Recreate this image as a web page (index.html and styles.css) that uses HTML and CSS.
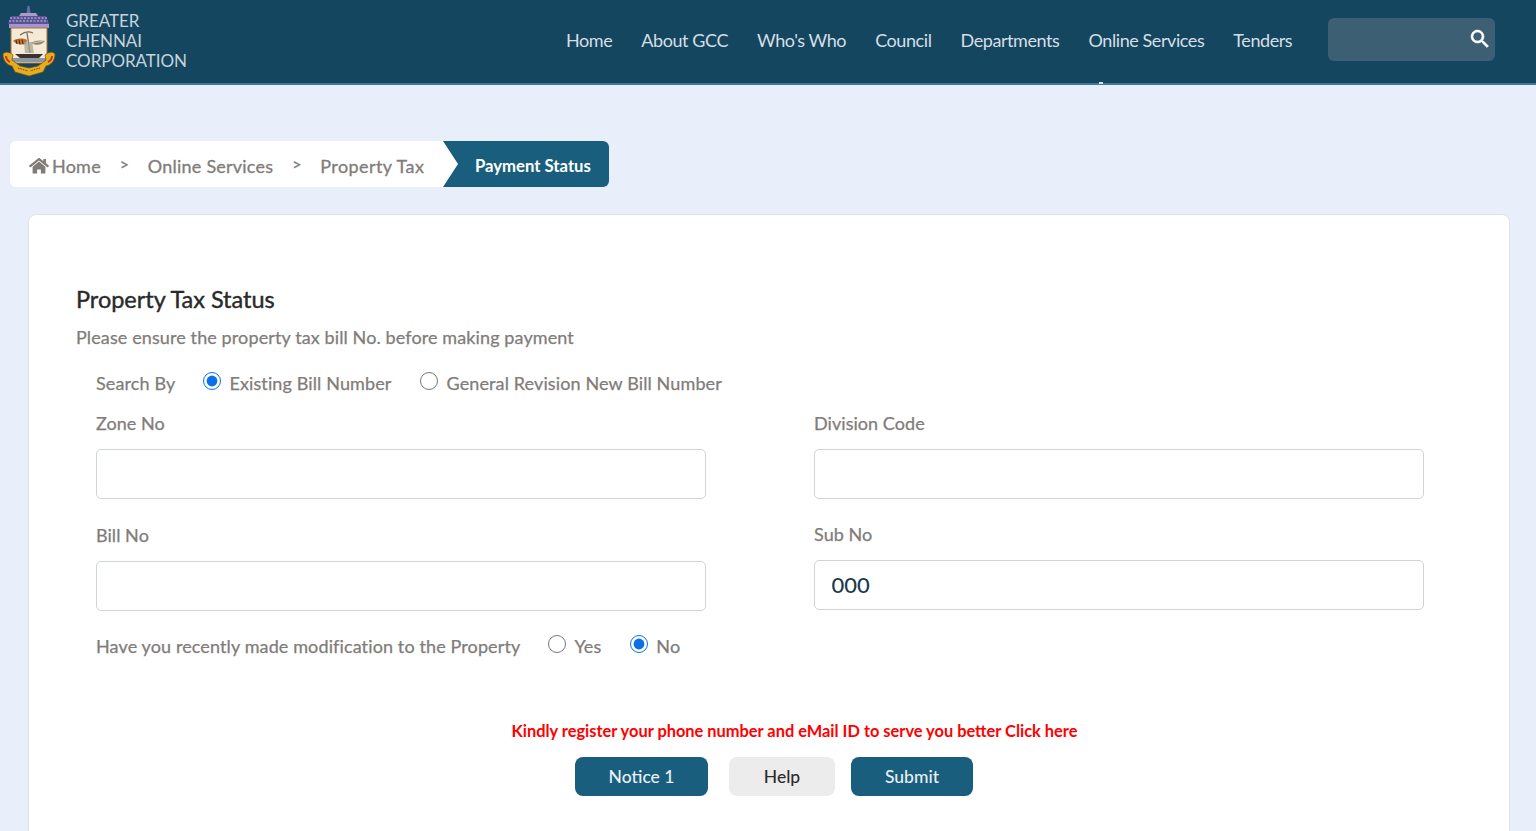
FILE: index.html
```html
<!DOCTYPE html>
<html lang="en">
<head>
<meta charset="utf-8">
<title>Property Tax Status</title>
<link rel="stylesheet" href="styles.css">
</head>
<body>
<header class="topbar">
  <a class="brand">
    <svg class="logo" width="56" height="72" viewBox="0 0 56 72">
      <path d="M26.500 0h2l1 7h-4z" fill="#6f6aa5"/>
      <path d="M20 7h15l2 3H18z" fill="#a79cc9"/>
      <path d="M10 10h35l3 8H7z" fill="#5b5296"/>
      <path d="M9 12h37M8 15h39" stroke="#c9c3e2" stroke-width="1" stroke-dasharray="2 1.500"/>
      <rect x="8" y="18" width="40" height="4" fill="#a495cf"/>
      <rect x="10" y="22" width="36" height="35" fill="#f5ead6" stroke="#a9743c"/>
      <path d="M12 35c4-3 10-3 14-1l-1 4c-4 1-9 1-13-3z" fill="#c4702c"/>
      <path d="M15 34l1 4M18 33.500l1 5M21 33.500l1 4.500" stroke="#3a2414" stroke-width=".9"/>
      <path d="M30 37c4-3 10-3 14-2-3 4-9 5-14 2z" fill="#8f8470"/>
      <path d="M32 37l10-2" stroke="#e6dcc6" stroke-width=".8"/>
      <path d="M26 27l3 20M19 29c4-3 9-4 13-2" stroke="#7b6c5c" stroke-width="1.300" fill="none"/>
      <path d="M23 36h8l2 11h-9z" fill="#a7a096" opacity=".7"/>
      <path d="M14 48h28l-4 4H19z" fill="#3a3330"/>
      <rect x="11" y="52" width="34" height="4" fill="#8c97a0"/>
      <path d="M12 49c-3-3-8-4-10-1 0 7 4 11 9 12l3 6 14 4 14-4 3-6c5-1 9-5 9-12-2-3-7-2-10 1l1 5-8 6-9 2-9-2-8-6z" fill="#e6ae1f" stroke="#7a4f10" stroke-width=".7"/>
      <path d="M5 50c0 3 2 5 4 6M51 50c0 3-2 5-4 6" stroke="#c8321e" stroke-width="2" fill="none"/>
      <path d="M17 62l10 3M39 62l-10 3" stroke="#6b4310" stroke-width="1" stroke-dasharray="1.500 1"/>
    </svg>
    <span class="brand-name">GREATER<br>CHENNAI<br>CORPORATION</span>
  </a>
  <nav class="menu">
    <a>Home</a>
    <a>About GCC</a>
    <a>Who's Who</a>
    <a>Council</a>
    <a>Departments</a>
    <a>Online Services</a>
    <a>Tenders</a>
  </nav>
  <div class="search">
    <svg width="24" height="24" viewBox="0 0 24 24"><path fill="#fff" stroke="#fff" stroke-width=".6" d="M15.500 14h-.79l-.28-.27A6.470 6.470 0 0 0 16 9.500 6.500 6.500 0 1 0 9.500 16c1.610 0 3.090-.59 4.230-1.570l.27.28v.79l5 4.990L20.490 19l-4.990-5zm-6 0C7.010 14 5 11.990 5 9.500S7.010 5 9.500 5 14 7.010 14 9.500 11.990 14 9.500 14z"/></svg>
  </div>
</header>

<nav class="crumbs">
  <a class="crumb crumb-home">
    <svg class="home-icon" width="20" height="17" viewBox="0 0 20 17"><path fill="#807c79" d="M10 3.400 3.600 8.700V15c0 .4.300.6.600.6h3.900v-4.200h3.800v4.200h3.900c.3 0 .6-.2.600-.6V8.700zM19.800 7.600 17 5.300V1h-2.600v2.100L11 .4C10.400-.1 9.600-.1 9 .4L.2 7.600c-.2.2-.2.5 0 .7l.8.900c.2.2.5.2.7 0L10 2.400l8.300 6.800c.2.2.5.2.7 0l.8-.9c.2-.2.2-.5 0-.7z"/></svg>
    Home
  </a>
  <span class="sep">&gt;</span>
  <a class="crumb">Online Services</a>
  <span class="sep">&gt;</span>
  <a class="crumb crumb-tax">Property Tax</a>
  <span class="crumb-active">Payment Status</span>
</nav>

<main class="card">
  <h1 class="title">Property Tax Status</h1>
  <p class="lead">Please ensure the property tax bill No. before making payment</p>
  <form class="form">
    <div class="choice-row">
      <span class="choice-label">Search By</span>
      <label class="choice"><input type="radio" name="by" checked><span>Existing Bill Number</span></label>
      <label class="choice"><input type="radio" name="by"><span>General Revision New Bill Number</span></label>
    </div>
    <div class="columns">
      <div class="col">
        <label class="field"><span class="field-label">Zone No</span><input class="input" type="text"></label>
        <label class="field"><span class="field-label">Bill No</span><input class="input" type="text"></label>
      </div>
      <div class="col">
        <label class="field"><span class="field-label">Division Code</span><input class="input" type="text"></label>
        <label class="field field-tight"><span class="field-label">Sub No</span><input class="input" type="text" value="000"></label>
      </div>
    </div>
    <div class="choice-row choice-row-mod">
      <span class="choice-label">Have you recently made modification to the Property</span>
      <label class="choice"><input type="radio" name="mod"><span>Yes</span></label>
      <label class="choice"><input type="radio" name="mod" checked><span>No</span></label>
    </div>
  </form>
  <p class="notice">Kindly register your phone number and eMail ID to serve you better Click here</p>
  <div class="actions">
    <button class="btn btn-primary btn-notice" type="button">Notice 1</button>
    <button class="btn btn-light" type="button">Help</button>
    <button class="btn btn-primary btn-submit" type="button">Submit</button>
  </div>
</main>
</body>
</html>
```
FILE: styles.css
```css
* { box-sizing: border-box; }
html, body { height: 100%; overflow: hidden; }
body {
  margin: 0;
  background: #e9effa;
  font-family: Lato, "Liberation Sans", sans-serif;
  color: #807c79;
}
.topbar {
  position: relative;
  height: 85px;
  background: #154660;
  border-bottom: 2px solid #3f7a99;
  display: flex;
  align-items: flex-start;
}
.topbar::after {
  content: "";
  position: absolute;
  left: 1099px;
  bottom: -1px;
  width: 4px;
  height: 2px;
  background: #cfe0ea;
  box-shadow: 24px 0 0 -1px #cfe0ea;
}
.brand { display: flex; margin-left: 1px; padding-top: 6px; width: 549px; }
.logo { flex: none; }
.brand-name {
  margin: 4.500px 0 0 9px;
  font-size: 17px;
  line-height: 20px;
  color: #c6d3da;
  letter-spacing: -.05px;
}
.menu { display: flex; gap: 29px; padding-top: 28px; margin-left: 16px; }
.menu a { font-size: 18px; line-height: 24px; color: #d5dfe4; letter-spacing: -.42px; white-space: nowrap; }
.search {
  margin: 18px 0 0 36px;
  width: 167px;
  height: 43px;
  background: #3c5f74;
  border-radius: 6px;
  display: flex;
  justify-content: flex-end;
  align-items: center;
  padding: 0 3px 2px 0;
}
.crumbs {
  margin: 56px 0 0 10px;
  width: 599px;
  height: 46px;
  background: #fff;
  border-radius: 6px;
  display: flex;
  align-items: center;
  font-size: 18px;
  -webkit-text-stroke: .3px #807c79;
  letter-spacing: .22px;
}
.crumb { color: #807c79; white-space: nowrap; padding-top: 3px; }
.crumb-home { display: flex; align-items: center; gap: 3px; margin-left: 19px; }
.home-icon { margin-top: 1px; }
.crumb-tax { letter-spacing: .42px; }
.sep { font-size: 16px; margin: -2px 19px 0; width: 9px; }
.crumb-active {
  margin-left: auto;
  width: 166px;
  height: 46px;
  background: #195f7d;
  color: #fff;
  font-size: 16.700px;
  font-weight: 700;
  letter-spacing: 0;
  -webkit-text-stroke: 0;
  border-radius: 0 6px 6px 0;
  display: flex;
  align-items: center;
  padding: 3px 0 0 32px;
  clip-path: polygon(0 0, 100% 0, 100% 100%, 0 100%, 15px 50%);
}
.card {
  margin: 27px 26px 0 28px;
  height: 700px;
  background: #fff;
  border: 1px solid #dfe3e8;
  border-radius: 8px;
  padding: 69px 47px 0;
}
.title {
  margin: 0;
  font-size: 23.500px;
  line-height: 30px;
  font-weight: 400;
  color: #2a2a2a;
  -webkit-text-stroke: .4px #2a2a2a;
  letter-spacing: -.03px;
}
.lead { margin: 10px 0 0; font-size: 18px; line-height: 26px; letter-spacing: .11px; -webkit-text-stroke: .25px #807c79; }
.form { margin: 0 0 0 20px; font-size: 18px; }
.choice-row { display: flex; align-items: center; height: 24px; margin-top: 21px; letter-spacing: .12px; -webkit-text-stroke: .25px #807c79; }
.choice-label { margin-right: 28px; }
.choice { display: flex; align-items: center; margin-right: 29px; }
.choice input {
  width: 18px;
  height: 18px;
  margin: -4px 8px 0 0;
  accent-color: #0b6fe8;
}
.columns { display: flex; gap: 108px; margin-top: 15px; width: 1328px; }
.col { flex: 1; display: flex; flex-direction: column; gap: 23px; }
.field { display: flex; flex-direction: column; }
.field-tight { margin-top: -1px; }
.field-label { line-height: 26px; height: 26px; letter-spacing: .05px; -webkit-text-stroke: .25px #807c79; }
.input {
  margin-top: 13px;
  height: 50px;
  border: 1px solid #ced4da;
  border-radius: 5px;
  padding: 0 16.500px 2px;
  font: 500 22px Lato, sans-serif;
  color: #1d3a4d;
  background: #fff;
}
.choice-row-mod { margin-top: 23px; }
.notice {
  margin: 61px 0 0;
  text-align: center;
  font-size: 16.400px;
  line-height: 24px;
  font-weight: 700;
  color: #ff0000;
  width: 1437px;
}
.actions { display: flex; justify-content: center; margin-top: 14px; width: 1396px; }
.btn {
  height: 39px;
  border: 0;
  border-radius: 8px;
  font: 500 17.500px Lato, sans-serif;
  padding: 0;
}
.btn-primary { background: #195f7d; color: #e8f0f4; }
.btn-light { background: #ececec; color: #2c2c2c; width: 106px; margin: 0 16px 0 21px; }
.btn-notice { width: 133px; }
.btn-submit { width: 122px; }
```
